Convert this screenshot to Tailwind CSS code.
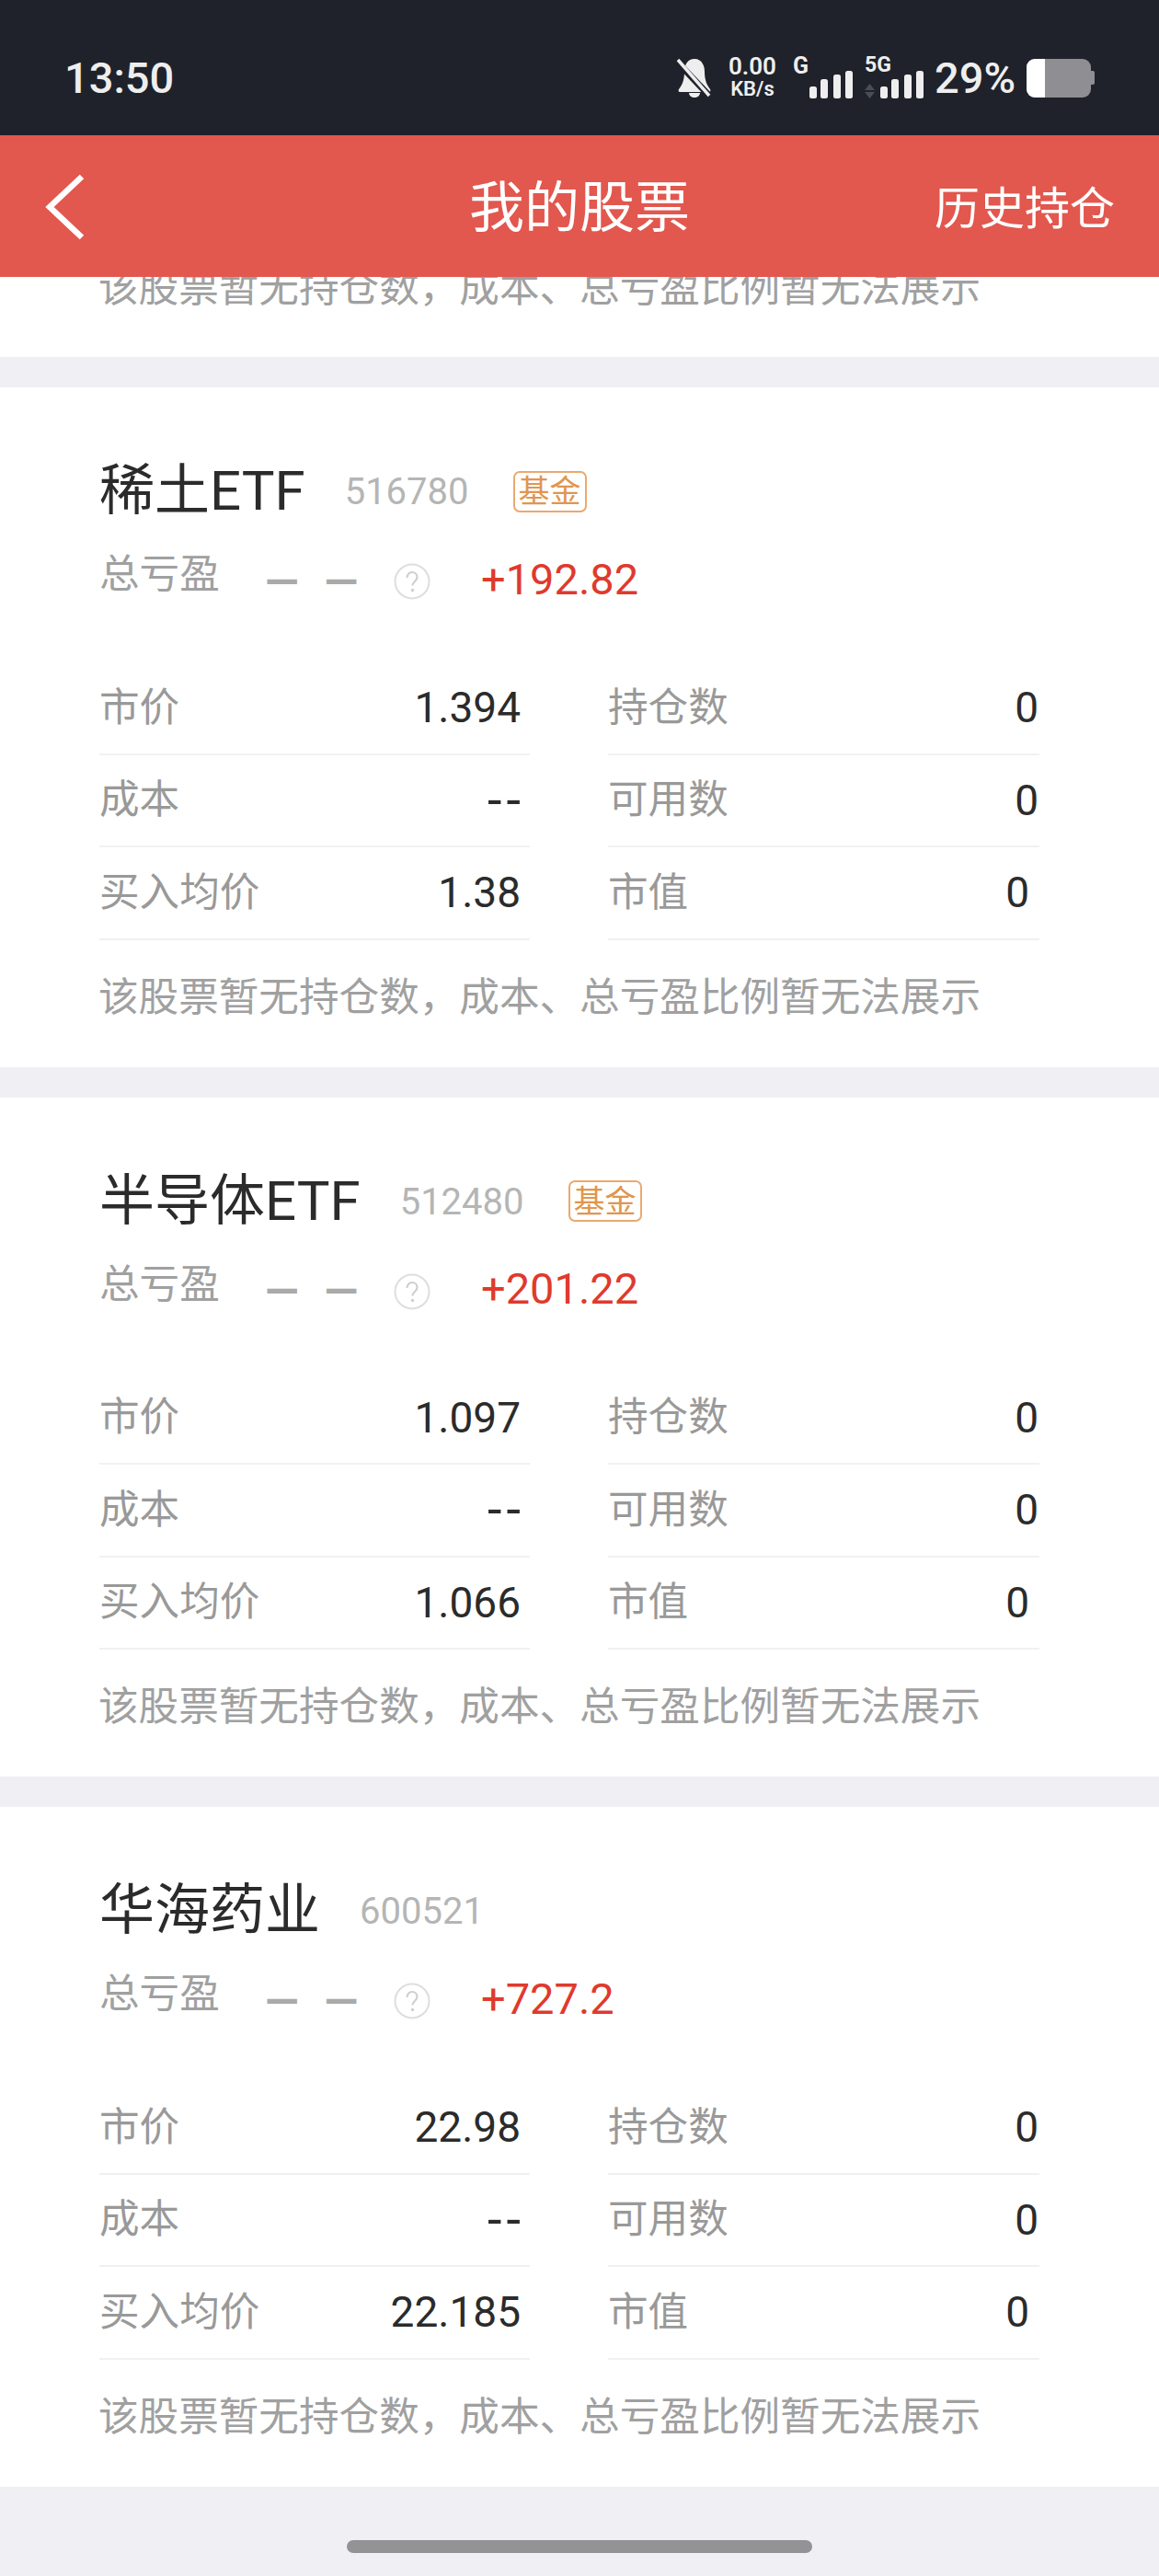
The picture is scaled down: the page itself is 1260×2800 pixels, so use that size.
<!DOCTYPE html>
<html lang="zh-CN">
<head>
  <meta charset="UTF-8"/>
  <meta name="viewport" content="width=device-width, initial-scale=1.0"/>
  <title>我的股票</title>
  <script src="https://cdn.jsdelivr.net/npm/@tailwindcss/browser@4"></script>
</head>
<body class="bg-[#efeff4] font-['Roboto','Noto_Sans_CJK_SC',sans-serif] w-[1260px] h-[2800px] overflow-hidden relative">

  <!-- status bar -->
  <div class="h-[147px] bg-[#1f222b] flex items-center pt-[22px] pl-[70px] pr-[70px] text-[#eeeeee]">
    <span class="text-[47px] font-medium leading-none">13:50</span>
    <div class="ml-auto flex items-center h-[60px]">
      <svg width="40" height="44" viewBox="0 0 40 44" class="block">
        <path d="M20 1c7 0 11 6 11 14 0 8 2 14 6 19 1 2 0 3-2 3H5c-2 0-3-1-2-3 4-5 6-11 6-19 0-8 4-14 11-14zM14 38h12c0 3-3 5-6 5s-6-2-6-5z" fill="#eeeeee"/>
        <path d="M1 4l36 38" stroke="#1f222b" stroke-width="7"/>
        <path d="M2 2l34 39" stroke="#eeeeee" stroke-width="3.5"/>
      </svg>
      <div class="ml-[15px] w-[56px] flex flex-col items-center font-semibold leading-none">
        <span class="text-[26px] leading-[25px]">0.00</span>
        <span class="text-[22px] leading-[24px]">KB/s</span>
      </div>
      <div class="ml-[16px] relative w-[65px] h-[44px]">
        <span class="absolute left-0 top-[-4px] text-[25px] font-bold leading-none">G</span>
        <svg width="48" height="30" viewBox="0 0 48 30" class="absolute left-[18px] bottom-0" fill="#eeeeee">
          <rect x="0" y="17" width="8" height="13" rx="2.5"/>
          <rect x="12" y="9" width="8" height="21" rx="2.5"/>
          <rect x="26" y="4" width="8" height="26" rx="2.5"/>
          <rect x="39" y="0" width="8" height="30" rx="2.5"/>
        </svg>
      </div>
      <div class="ml-[13px] relative w-[64px] h-[44px]">
        <span class="absolute left-0 top-[-4px] text-[23px] font-bold leading-none">5G</span>
        <svg width="11" height="16" viewBox="0 0 11 16" class="absolute left-0 bottom-0" fill="#4a4d55">
          <path d="M5.5 0L11 7H0zM0 9h11l-5.500 7z"/>
        </svg>
        <svg width="48" height="30" viewBox="0 0 48 30" class="absolute left-[17px] bottom-0" fill="#eeeeee">
          <rect x="0" y="17" width="8" height="13" rx="2.5"/>
          <rect x="12" y="9" width="8" height="21" rx="2.5"/>
          <rect x="26" y="4" width="8" height="26" rx="2.5"/>
          <rect x="39" y="0" width="8" height="30" rx="2.5"/>
        </svg>
      </div>
      <span class="ml-[12px] text-[47px] font-medium leading-none">29%</span>
      <div class="ml-[12px] flex items-center">
        <div class="w-[70px] h-[42px] rounded-[9px] overflow-hidden bg-[#8e8e93]">
          <div class="w-[20px] h-full bg-white"></div>
        </div>
        <div class="w-[4px] h-[15px] bg-[#8e8e93] rounded-r-[2px]"></div>
      </div>
    </div>
  </div>

  <!-- nav bar -->
  <div class="h-[154px] bg-[#e2574e] relative flex items-center justify-center pt-[6px] text-white">
    <svg width="44" height="72" viewBox="0 0 44 72" class="absolute left-[48px] top-[42px]" fill="none">
      <path d="M41 3L6 36l35 33" stroke="#ffffff" stroke-width="6.500"/>
    </svg>
    <span class="text-[60px] leading-none">我的股票</span>
    <span class="absolute right-[48px] text-[49px] leading-none">历史持仓</span>
  </div>

  <!-- tail of the card that has scrolled under the nav bar -->
  <div class="h-[87px] bg-white overflow-hidden flex items-end pb-[44px] pl-[107px]">
    <p class="text-[43.6px] leading-[60px] text-[#a0a0a0] whitespace-nowrap shrink-0">该股票暂无持仓数，成本、总亏盈比例暂无法展示</p>
  </div>

  <div id="list"></div>

  <!-- home indicator -->
  <div class="absolute left-[377px] top-[2761px] w-[506px] h-[14px] rounded-full bg-[#939396]"></div>

  <script>
    const stocks = [
      { name: '稀土ETF', code: '516780', fund: true, total: '+192.82', price: '1.394', avg: '1.38' },
      { name: '半导体ETF', code: '512480', fund: true, total: '+201.22', price: '1.097', avg: '1.066' },
      { name: '华海药业', code: '600521', fund: false, total: '+727.2', price: '22.98', avg: '22.185' },
    ];

    const row = (label, value, pad) => `
      <div class="h-[100.5px] border-b-2 border-[#f1f1f3] flex items-center justify-between ${pad}">
        <span class="text-[43.6px] text-[#999999]">${label}</span>
        <span class="${value === '--' ? 'text-[56px] tracking-[5px] -mr-[5px]' : 'text-[46px]'} leading-none text-[#2b2b2b]">${value}</span>
      </div>`;

    document.getElementById('list').innerHTML = stocks.map(s => `
      <div class="mt-[33px] h-[738.5px] bg-white pt-[83px] px-[108px]">
        <div class="h-[60px] flex items-center">
          <span class="text-[60px] leading-none text-[#2b2b2b]">${s.name}</span>
          <span class="ml-[43px] text-[40px] leading-none text-[#b5b5b5] mt-[2px]">${s.code}</span>
          ${s.fund ? `<span class="ml-[48px] w-[80px] h-[45px] border-2 border-[#eaa96f] rounded-[7px] flex items-center justify-center text-[34px] leading-none text-[#e0964f]">基金</span>` : ''}
        </div>
        <div class="mt-[32px] h-[60px] flex items-center">
          <span class="w-[180px] text-[43.6px] leading-none text-[#a0a0a0] mb-[2px]">总亏盈</span>
          <span class="w-[140px] text-[48px] leading-none font-bold text-[#aaaaaa] [word-spacing:16px] mt-[13px]">— —</span>
          <svg width="40" height="40" viewBox="0 0 40 40" class="mt-[12px]" fill="none">
            <circle cx="20" cy="20" r="18.500" stroke="#dedede" stroke-width="2"/>
            <path d="M14.500 16c0-3.500 2.500-6 5.500-6s5.500 2.300 5.500 5.500c0 4-5 4.500-5 9" stroke="#cfcfcf" stroke-width="2.200"/>
            <circle cx="20.500" cy="29.500" r="1.700" fill="#cfcfcf"/>
          </svg>
          <span class="ml-[55px] text-[47px] leading-none text-[#df3a2e] mt-[6px]">${s.total}</span>
        </div>
        <div class="mt-[64px] w-[1022px] grid grid-cols-[468px_469px] justify-between">
          <div>
            ${row('市价', s.price, 'pr-[10px]')}
            ${row('成本', '--', 'pr-[10px]')}
            ${row('买入均价', s.avg, 'pr-[10px]')}
          </div>
          <div>
            ${row('持仓数', '0', 'pr-[1px]')}
            ${row('可用数', '0', 'pr-[1px]')}
            ${row('市值', '0', 'pr-[11px]')}
          </div>
        </div>
        <p class="mt-[33px] -ml-[1px] text-[43.6px] leading-[60px] text-[#a0a0a0] whitespace-nowrap">该股票暂无持仓数，成本、总亏盈比例暂无法展示</p>
      </div>`).join('');
  </script>
</body>
</html>
